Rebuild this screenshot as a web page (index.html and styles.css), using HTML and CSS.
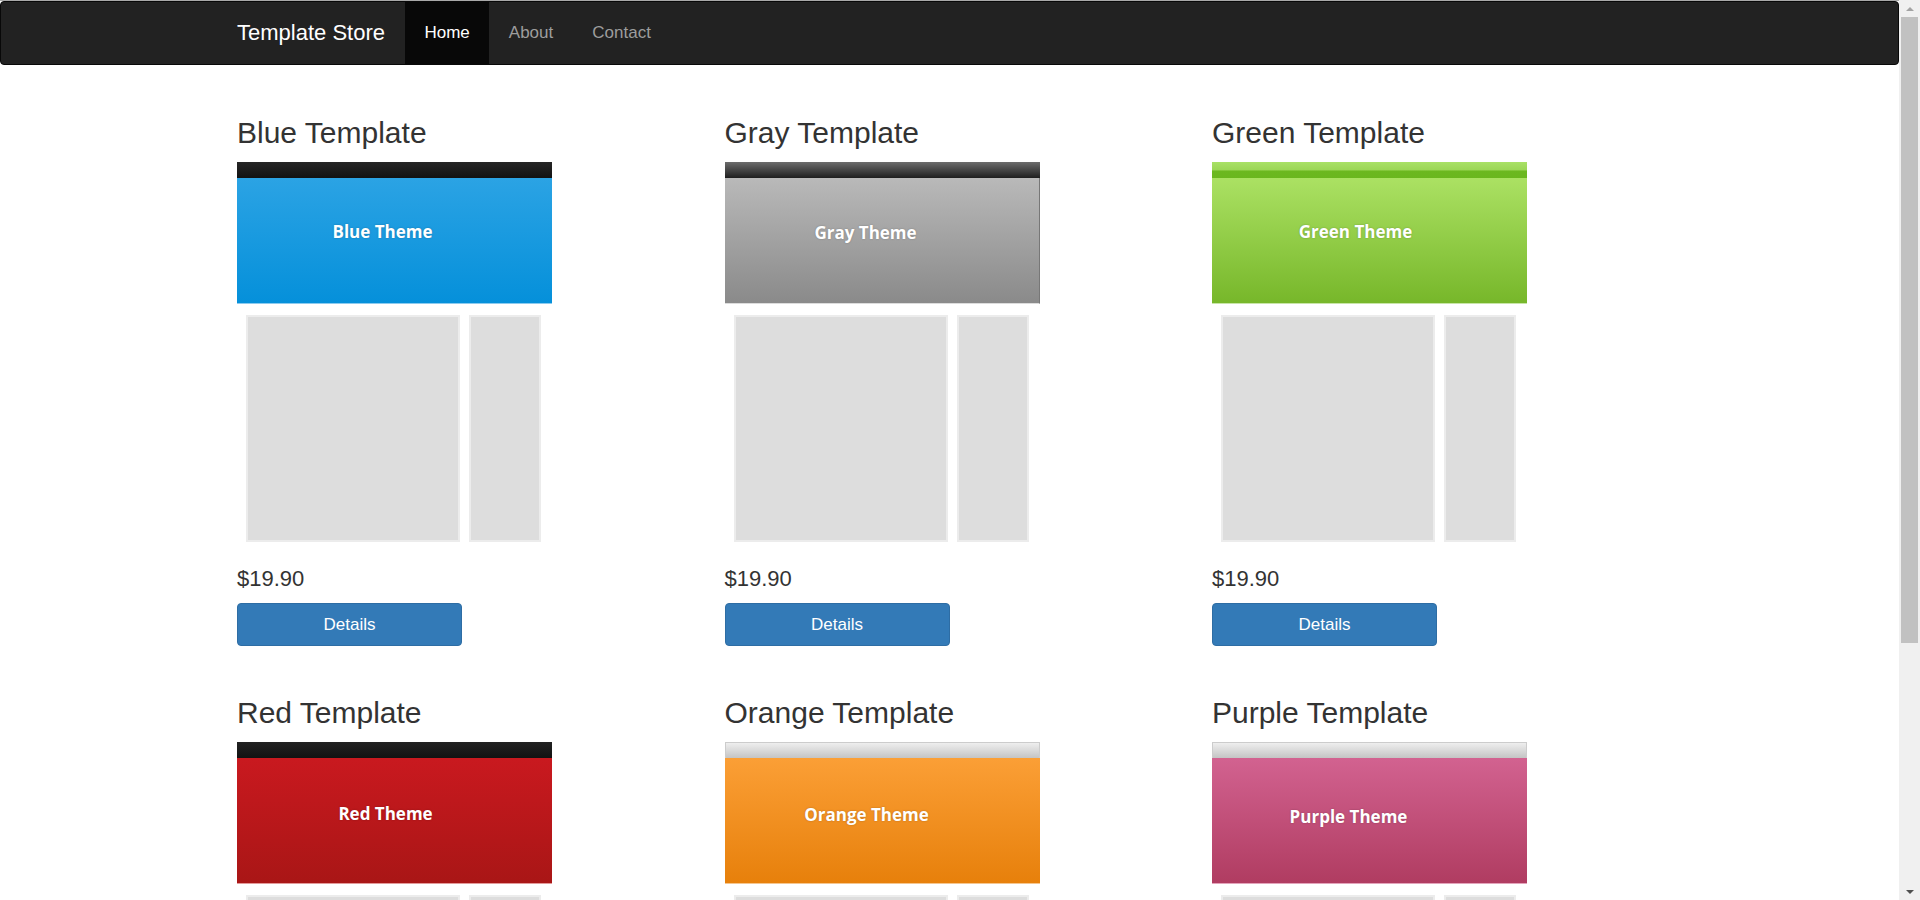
FILE: index.html
```html
<!DOCTYPE html>
<html lang="en">
<head>
<meta charset="utf-8">
<title>Template Store</title>
<link rel="stylesheet" href="styles.css">
</head>
<body>
<nav class="navbar">
  <div class="nav-inner">
    <a class="brand" href="#">Template Store</a>
    <ul class="nav">
      <li class="active"><a href="#">Home</a></li>
      <li><a href="#">About</a></li>
      <li><a href="#">Contact</a></li>
    </ul>
  </div>
</nav>
<main class="container">
  <div class="grid">
    <div class="card">
      <h2>Blue Template</h2>
      <div class="thumb thumb-blue">
        <div class="thumb-bar"></div>
        <div class="thumb-band"><span>Blue Theme</span></div>
        <div class="thumb-body"><div class="box box-main"></div><div class="box box-side"></div></div>
      </div>
      <p class="price">$19.90</p>
      <a class="btn" href="#">Details</a>
    </div>
    <div class="card">
      <h2>Gray Template</h2>
      <div class="thumb thumb-gray">
        <div class="thumb-bar"></div>
        <div class="thumb-band"><span>Gray Theme</span></div>
        <div class="thumb-body"><div class="box box-main"></div><div class="box box-side"></div></div>
      </div>
      <p class="price">$19.90</p>
      <a class="btn" href="#">Details</a>
    </div>
    <div class="card">
      <h2>Green Template</h2>
      <div class="thumb thumb-green">
        <div class="thumb-bar"></div>
        <div class="thumb-band"><span>Green Theme</span></div>
        <div class="thumb-body"><div class="box box-main"></div><div class="box box-side"></div></div>
      </div>
      <p class="price">$19.90</p>
      <a class="btn" href="#">Details</a>
    </div>
    <div class="card">
      <h2>Red Template</h2>
      <div class="thumb thumb-red">
        <div class="thumb-bar"></div>
        <div class="thumb-band"><span>Red Theme</span></div>
        <div class="thumb-body"><div class="box box-main"></div><div class="box box-side"></div></div>
      </div>
      <p class="price">$19.90</p>
      <a class="btn" href="#">Details</a>
    </div>
    <div class="card">
      <h2>Orange Template</h2>
      <div class="thumb thumb-orange">
        <div class="thumb-bar"></div>
        <div class="thumb-band"><span>Orange Theme</span></div>
        <div class="thumb-body"><div class="box box-main"></div><div class="box box-side"></div></div>
      </div>
      <p class="price">$19.90</p>
      <a class="btn" href="#">Details</a>
    </div>
    <div class="card">
      <h2>Purple Template</h2>
      <div class="thumb thumb-purple">
        <div class="thumb-bar"></div>
        <div class="thumb-band"><span>Purple Theme</span></div>
        <div class="thumb-body"><div class="box box-main"></div><div class="box box-side"></div></div>
      </div>
      <p class="price">$19.90</p>
      <a class="btn" href="#">Details</a>
    </div>
  </div>
</main>
<div class="scrollbar" aria-hidden="true">
  <div class="sb-btn"><span class="sb-arrow-up"></span></div>
  <div class="sb-track"><div class="sb-thumb"></div></div>
  <div class="sb-btn"><span class="sb-arrow-down"></span></div>
</div>
</body>
</html>
```
FILE: styles.css
```css
html {
  border-top: 1px solid #a9a9a9;
  background: #fff;
}
::-webkit-scrollbar {
  display: none;
}

body {
  margin: 0;
  padding: 0 21px 19px 0;
  font-family: "Liberation Sans", Arial, Helvetica, sans-serif;
  color: #333;
}

/* Window scrollbar */
.scrollbar {
  position: fixed;
  top: 0;
  right: 0;
  width: 21px;
  height: 100vh;
  display: flex;
  flex-direction: column;
  background: #f0f0f0;
}
.sb-btn {
  height: 17px;
  display: flex;
  align-items: center;
  justify-content: center;
}
.sb-arrow-up {
  border-left: 4px solid transparent;
  border-right: 4px solid transparent;
  border-bottom: 4px solid #a3a3a3;
}
.sb-arrow-down {
  border-left: 4px solid transparent;
  border-right: 4px solid transparent;
  border-top: 4px solid #505050;
}
.sb-track {
  flex: 1;
  padding: 0 2px;
}
.sb-thumb {
  height: 626px;
  background: #c1c1c1;
}

/* Navbar */
.navbar {
  box-sizing: border-box;
  height: 64px;
  background: #222;
  border: 1px solid #080808;
  border-radius: 4px;
}
.nav-inner {
  display: flex;
  height: 100%;
  padding-left: 236px;
}
.brand {
  display: flex;
  align-items: center;
  margin-right: 20px;
  font-size: 22px;
  color: #fff;
  text-decoration: none;
}
.nav {
  display: flex;
  margin: 0;
  padding: 0;
  list-style: none;
}
.nav li a {
  display: flex;
  align-items: center;
  height: 100%;
  padding: 0 19.5px;
  font-size: 17px;
  color: #9d9d9d;
  text-decoration: none;
}
.nav li.active a {
  background: #080808;
  color: #fff;
}

/* Content */
.container {
  margin-left: 237px;
  padding-top: 51px;
}
.grid {
  display: grid;
  grid-template-columns: repeat(3, 487.5px);
  row-gap: 50px;
}
.card {
  display: flex;
  flex-direction: column;
  align-items: flex-start;
}
.card h2 {
  margin: 0;
  font-size: 30px;
  font-weight: 500;
  line-height: 33px;
  color: #333;
}
.price {
  margin: 17px 0 0;
  font-size: 22px;
  line-height: 24px;
}
.btn {
  box-sizing: border-box;
  display: flex;
  align-items: center;
  justify-content: center;
  width: 225px;
  height: 43px;
  margin-top: 12px;
  background: #337ab7;
  border: 1px solid #2e6da4;
  border-radius: 4px;
  color: #fff;
  font-size: 17px;
  text-decoration: none;
}

/* Template thumbnails */
.thumb {
  width: 315px;
  height: 388px;
  margin-top: 13px;
  display: flex;
  flex-direction: column;
  --dx: 26px;
  --dy: 18px;
}
.thumb-bar {
  box-sizing: border-box;
  height: 16px;
}
.thumb-band {
  box-sizing: border-box;
  height: 126px;
  display: flex;
  align-items: center;
  justify-content: center;
  padding-right: var(--dx);
  padding-bottom: var(--dy);
  border-bottom: 1px solid #8ccbef;
}
.thumb-band span {
  font-family: "Open Sans", "Noto Sans", sans-serif;
  font-weight: 700;
  font-size: 17px;
  color: #fff;
  text-shadow: 0 0 2px rgba(0, 0, 0, 0.25);
}
.thumb-body {
  display: flex;
  gap: 9px;
  padding: 11px 0 0 9px;
}
.box {
  box-sizing: border-box;
  height: 227px;
  background: #dddddd;
  border: 2px solid #ececec;
}
.box-main { width: 214px; }
.box-side { width: 72px; }

.thumb-blue { --dx: 24px; --dy: 19px; }
.thumb-blue .thumb-bar { background: linear-gradient(#262626, #121212); }
.thumb-blue .thumb-band { background: linear-gradient(#2ba3e4, #0590da); border-bottom-color: #8ccbef; }

.thumb-gray { --dx: 32px; --dy: 16px; }
.thumb-gray .thumb-bar { background: linear-gradient(#6c6c6c, #1e1e1e); }
.thumb-gray .thumb-band { background: linear-gradient(#b9b9b9, #8a8a8a); border-right: 1px solid #777; border-bottom-color: #dcdcdc; }

.thumb-green { --dx: 28px; --dy: 18px; }
.thumb-green .thumb-bar { background: linear-gradient(#a9e166 0, #9bd655 50%, #6cb820 56%, #6ab71e 100%); }
.thumb-green .thumb-band { background: linear-gradient(#abe163, #77b72a); border-bottom-color: #c8e5a8; }

.thumb-red { --dx: 18px; --dy: 14px; }
.thumb-red .thumb-bar { background: linear-gradient(#222, #121212); }
.thumb-red .thumb-band { background: linear-gradient(#c9191f, #a91616); border-bottom-color: #e39a9a; }

.thumb-orange { --dx: 31px; --dy: 13px; }
.thumb-orange .thumb-bar { background: linear-gradient(#eeeeee, #c4c4c4); border: 1px solid #cccccc; border-bottom: 0; }
.thumb-orange .thumb-band { background: linear-gradient(#fb9f36, #e7800b); border-bottom-color: #f5c68f; }

.thumb-purple { --dx: 42px; --dy: 8px; }
.thumb-purple .thumb-bar { background: linear-gradient(#eeeeee, #c4c4c4); border: 1px solid #cccccc; border-bottom: 0; }
.thumb-purple .thumb-band { background: linear-gradient(#d26290, #b03c61); border-bottom-color: #e3a4bb; }
```
